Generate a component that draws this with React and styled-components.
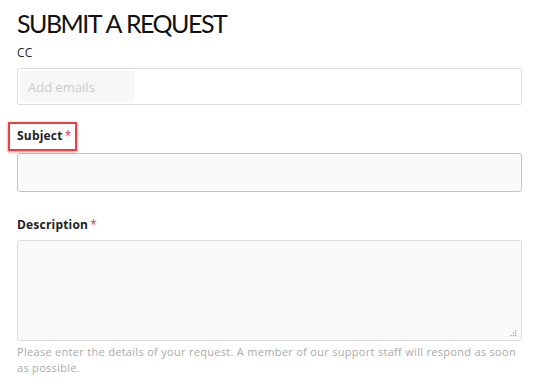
import React from "react";
import styled, { createGlobalStyle } from "styled-components";

const Global = createGlobalStyle`
  html, body { margin: 0; padding: 0; background: #fff; }
  body { font-family: "Open Sans", "DejaVu Sans", sans-serif; color: #111; }
  * { box-sizing: border-box; }
`;

const Page = styled.div`
  padding: 7px 18px 0 17px;
  width: 540px;
`;

const Title = styled.h1`
  margin: 0;
  font-family: Lato, "Open Sans", sans-serif;
  font-size: 25px;
  font-weight: 400;
  line-height: 33px;
  color: #111;
  letter-spacing: -1.5px;
  word-spacing: 1px;
`;

const Field = styled.div`
  display: flex;
  flex-direction: column;
  margin-top: ${(p) => p.$top || 0}px;
`;

const Label = styled.label`
  position: relative;
  align-self: flex-start;
  font-size: 12px;
  line-height: 16px;
  font-weight: ${(p) => (p.$bold ? 700 : 400)};
  color: #222;
  letter-spacing: 0.2px;
  margin-bottom: ${(p) => p.$gap}px;
`;

const Required = styled.span`
  color: #e0324b;
  margin-left: 2px;
  font-weight: 400;
`;

const Highlight = styled.span`
  position: absolute;
  left: -9px;
  top: -6px;
  right: -6px;
  bottom: -7px;
  border: 2px solid #ef3e42;
  box-shadow: 0 1px 3px rgba(0, 0, 0, 0.35);
  pointer-events: none;
`;

const EmailBox = styled.div`
  height: 37px;
  border: 1px solid #ddd;
  border-radius: 2px;
  background: #fff;
  padding: 2px;
  display: flex;
`;

const EmailChip = styled.div`
  width: 115px;
  background: #f7f7f7;
  border-radius: 2px;
  color: #ccc;
  font-size: 13px;
  display: flex;
  align-items: center;
  padding-left: 8px;
`;

const TextInput = styled.input`
  height: 39px;
  width: 100%;
  border: 1px solid #c4c4c4;
  border-radius: 3px;
  background: #fafafa;
  font-family: inherit;
  outline: none;
`;

const AreaWrap = styled.div`
  position: relative;
`;

const TextArea = styled.textarea`
  height: 101px;
  width: 100%;
  border: 1px solid #ddd;
  border-radius: 3px;
  background: #fafafa;
  font-family: inherit;
  resize: none;
  outline: none;
  display: block;
`;

const Grip = styled.svg`
  position: absolute;
  right: 5px;
  bottom: 4px;
  width: 7px;
  height: 7px;
  pointer-events: none;
`;

const Hint = styled.p`
  margin: 3px 0 0;
  font-size: 11px;
  line-height: 16px;
  color: #aaa;
  letter-spacing: 0.3px;
  padding-right: 4px;
`;

export default function App() {
  return (
    <>
      <Global />
      <Page>
        <Title>SUBMIT A REQUEST</Title>
        <Field $top={5}>
          <Label $gap={7}>CC</Label>
          <EmailBox>
            <EmailChip>Add emails</EmailChip>
          </EmailBox>
        </Field>
        <Field $top={23}>
          <Label $bold $gap={9}>
            Subject<Required>*</Required>
            <Highlight />
          </Label>
          <TextInput type="text" />
        </Field>
        <Field $top={25}>
          <Label $bold $gap={7}>
            Description<Required>*</Required>
          </Label>
          <AreaWrap>
            <TextArea />
            <Grip viewBox="0 0 7 7">
              <g fill="#9a9a9a">
                <rect x="5" y="0" width="1.2" height="1.2" />
                <rect x="3" y="2.5" width="1.2" height="1.2" />
                <rect x="5" y="2.5" width="1.2" height="1.2" />
                <rect x="0.5" y="5" width="1.2" height="1.2" />
                <rect x="3" y="5" width="1.2" height="1.2" />
                <rect x="5" y="5" width="1.2" height="1.2" />
              </g>
            </Grip>
          </AreaWrap>
          <Hint>
            Please enter the details of your request. A member of our support
            staff will respond as soon as possible.
          </Hint>
        </Field>
      </Page>
    </>
  );
}
